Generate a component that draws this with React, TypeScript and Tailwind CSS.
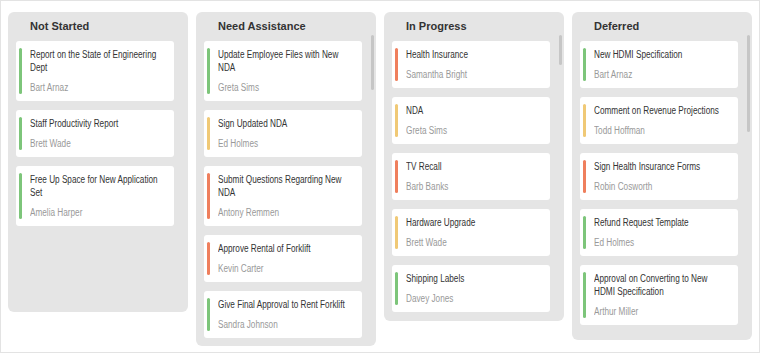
import React from 'react'

type Tone = 'green' | 'yellow' | 'red'

type Task = { title: string; owner: string; tone: Tone }

type Column = { name: string; height: string; thumb?: string; tasks: Task[] }

const barColor: Record<Tone, string> = {
  green: 'bg-[#7dc57a]',
  yellow: 'bg-[#f0c976]',
  red: 'bg-[#ef7f5d]',
}

const columns: Column[] = [
  {
    name: 'Not Started',
    height: 'h-[300px]',
    tasks: [
      { title: 'Report on the State of Engineering Dept', owner: 'Bart Arnaz', tone: 'green' },
      { title: 'Staff Productivity Report', owner: 'Brett Wade', tone: 'green' },
      { title: 'Free Up Space for New Application Set', owner: 'Amelia Harper', tone: 'green' },
    ],
  },
  {
    name: 'Need Assistance',
    height: 'h-[334px]',
    thumb: 'h-[55px]',
    tasks: [
      { title: 'Update Employee Files with New NDA', owner: 'Greta Sims', tone: 'green' },
      { title: 'Sign Updated NDA', owner: 'Ed Holmes', tone: 'yellow' },
      { title: 'Submit Questions Regarding New NDA', owner: 'Antony Remmen', tone: 'red' },
      { title: 'Approve Rental of Forklift', owner: 'Kevin Carter', tone: 'red' },
      { title: 'Give Final Approval to Rent Forklift', owner: 'Sandra Johnson', tone: 'green' },
    ],
  },
  {
    name: 'In Progress',
    height: 'h-[309px]',
    thumb: 'h-[30px]',
    tasks: [
      { title: 'Health Insurance', owner: 'Samantha Bright', tone: 'red' },
      { title: 'NDA', owner: 'Greta Sims', tone: 'yellow' },
      { title: 'TV Recall', owner: 'Barb Banks', tone: 'red' },
      { title: 'Hardware Upgrade', owner: 'Brett Wade', tone: 'yellow' },
      { title: 'Shipping Labels', owner: 'Davey Jones', tone: 'green' },
    ],
  },
  {
    name: 'Deferred',
    height: 'h-[328px]',
    thumb: 'h-[97px]',
    tasks: [
      { title: 'New HDMI Specification', owner: 'Bart Arnaz', tone: 'green' },
      { title: 'Comment on Revenue Projections', owner: 'Todd Hoffman', tone: 'yellow' },
      { title: 'Sign Health Insurance Forms', owner: 'Robin Cosworth', tone: 'red' },
      { title: 'Refund Request Template', owner: 'Ed Holmes', tone: 'green' },
      { title: 'Approval on Converting to New HDMI Specification', owner: 'Arthur Miller', tone: 'green' },
    ],
  },
]

// no narrow face installed, so squeeze regular Liberation Sans to Arial Narrow proportions
function Card({ task }: { task: Task }) {
  return (
    <div className="flex gap-2 rounded-[3px] bg-white py-[7px] pl-[3px] pr-2">
      <div className={`w-[3px] shrink-0 rounded-full ${barColor[task.tone]}`} />
      <div className="w-0 flex-1">
        <div className="w-[122%] origin-left scale-x-[0.82] font-['Liberation_Sans',Arial,sans-serif] text-[10px] leading-[13px]">
          <div className="text-[#333]">{task.title}</div>
          <div className="mt-[7px] text-[#999]">{task.owner}</div>
        </div>
      </div>
    </div>
  )
}

export default function App() {
  return (
    <div className="flex h-[353px] w-[760px] items-start gap-2 overflow-hidden border border-[#e3e3e3] bg-white pl-[7px] pt-[11px] font-['Liberation_Sans',Arial,sans-serif]">
      {columns.map((col) => (
        <div key={col.name} className={`relative w-[180px] shrink-0 overflow-hidden rounded-md bg-[#e5e5e5] ${col.height}`}>
          <div className="flex h-[29px] items-center pl-[22px] text-[11px] font-bold text-[#333]">{col.name}</div>
          <div className="flex flex-col gap-[9px] pl-2 pr-[14px]">
            {col.tasks.map((t) => (
              <Card key={t.title} task={t} />
            ))}
          </div>
          {col.thumb && <div className={`absolute right-[2px] top-[23px] w-[3px] rounded-full bg-[#c6c6c6] ${col.thumb}`} />}
        </div>
      ))}
    </div>
  )
}
